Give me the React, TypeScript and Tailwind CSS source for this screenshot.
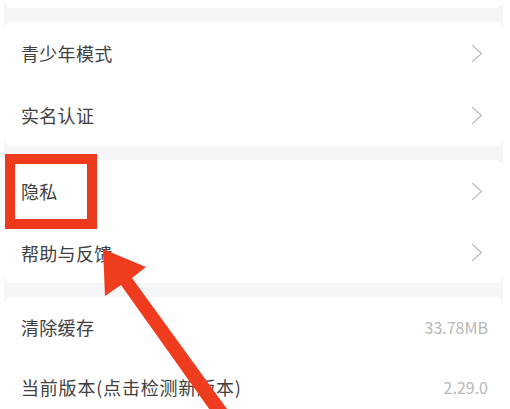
import React from "react";

const Chevron = () => (
  <svg width="12" height="19" viewBox="0 0 12 19" fill="none" className="mr-[5px]">
    <path d="M1.5 1.5 L10.5 9.5 L1.5 17.5" stroke="#c2c2c2" strokeWidth="1.5" strokeLinecap="round" strokeLinejoin="round" />
  </svg>
);

type RowProps = { label: string; value?: string; h: string; wide?: boolean };

const Row = ({ label, value, h, wide }: RowProps) => (
  <div className={`flex items-center justify-between pl-[17px] pr-[15px] ${h}`}>
    <span className={`text-[18px] leading-none text-[#404040] ${wide ? "tracking-[0.8px]" : "tracking-[0.3px]"}`}>{label}</span>
    {value ? (
      <span className="text-[16px] leading-none text-[#b8b8b8]">{value}</span>
    ) : (
      <Chevron />
    )}
  </div>
);

export default function App() {
  return (
    <div
      className="relative w-[510px] h-[409px] overflow-hidden bg-white"
      style={{ fontFamily: '"Noto Sans CJK SC", "Noto Sans", sans-serif' }}
    >
      <div className="ml-[4px] w-[499px] bg-[#f5f6f8] flex flex-col gap-[14px]">
        <div className="h-[8px] bg-white rounded-b-lg" />
        <div className="bg-white rounded-lg flex flex-col">
          <Row label="青少年模式" h="h-[62px]" />
          <Row label="实名认证" h="h-[62px]" />
        </div>
        <div className="bg-white rounded-lg flex flex-col">
          <Row label="隐私" h="h-[62px]" />
          <Row label="帮助与反馈" h="h-[61px]" />
        </div>
        <div className="bg-white rounded-lg flex flex-col">
          <Row label="清除缓存" value="33.78MB" h="h-[60px]" />
          <Row label="当前版本(点击检测新版本)" value="2.29.0" h="h-[60px]" wide />
        </div>
      </div>

      <div className="absolute left-[5px] top-[154px] w-[92px] h-[75px] border-[10px] border-[#ee3a1c]" />

      <svg className="absolute left-0 top-0" width="510" height="409" viewBox="0 0 510 409">
        <polygon
          points="103,249 146,267 132,278 235,420 217,420 121,285 105,296"
          fill="#f03c1e"
        />
      </svg>
    </div>
  );
}
